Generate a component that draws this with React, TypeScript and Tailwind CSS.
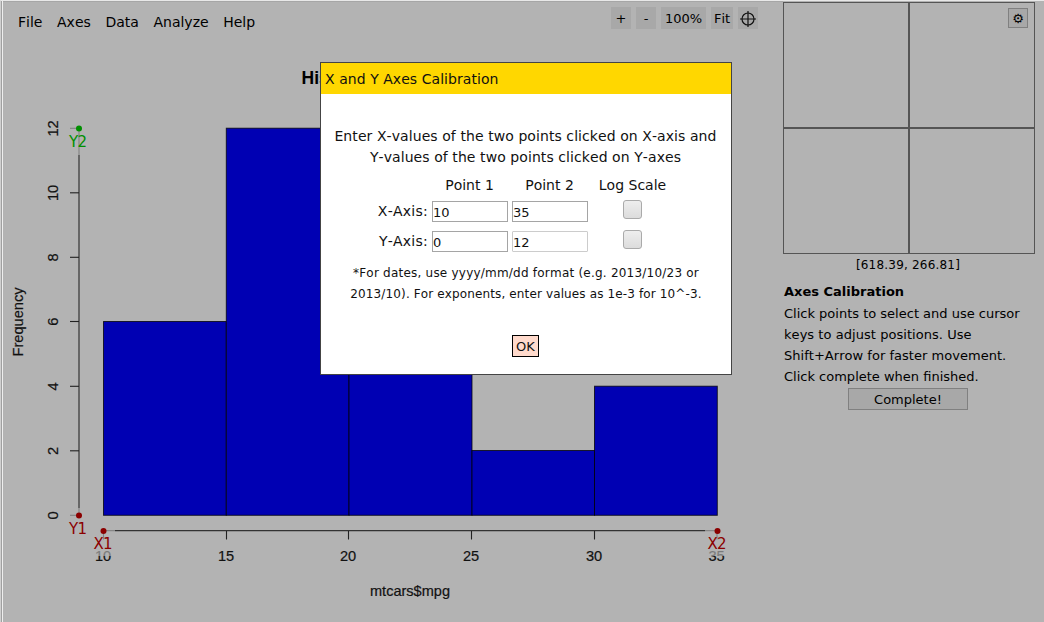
import React from "react";

const bars = [
  { x: 103.5, w: 122.8, y: 321.5 },
  { x: 226.3, w: 122.7, y: 128.2 },
  { x: 349, w: 123, y: 257 },
  { x: 472, w: 122.5, y: 450.5 },
  { x: 594.5, w: 122.8, y: 386.2 },
];

const xTicks = [
  { v: "10", x: 103.5 },
  { v: "15", x: 226.5 },
  { v: "20", x: 348.5 },
  { v: "25", x: 471.5 },
  { v: "30", x: 594.5 },
  { v: "35", x: 717 },
];

const yTicks = [
  { v: "0", y: 515.5 },
  { v: "2", y: 451 },
  { v: "4", y: 386.5 },
  { v: "6", y: 321.7 },
  { v: "8", y: 257.5 },
  { v: "10", y: 193 },
  { v: "12", y: 128.5 },
];

function Histogram() {
  return (
    <svg width="770" height="574" viewBox="0 48 770 574" className="block">
      <g fontFamily="'Liberation Sans', sans-serif" fontSize="14.6" fill="#111" textAnchor="middle">
        <text x="410" y="84" fontSize="17.5" fontWeight="bold" fill="#000">Histogram of mtcars$mpg</text>
        <text x="410" y="596" textLength="80" lengthAdjust="spacingAndGlyphs" stroke="#111" strokeWidth="0.2">mtcars$mpg</text>
        <text transform="translate(23.4 322) rotate(-90)" textLength="69" lengthAdjust="spacingAndGlyphs" stroke="#111" strokeWidth="0.2">Frequency</text>
        {xTicks.map((t) => (
          <text key={t.v} x={t.x - 0.5} y="561" stroke="#111" strokeWidth="0.2">{t.v}</text>
        ))}
        {yTicks.map((t) => (
          <text key={t.v} transform={`translate(58 ${t.y}) rotate(-90)`} stroke="#111" strokeWidth="0.2">{t.v}</text>
        ))}
      </g>
      <g stroke="#000" strokeOpacity="0.75" fill="#0000b3">
        {bars.map((b) => (
          <rect key={b.x} x={b.x} y={b.y} width={b.w} height={515.3 - b.y} />
        ))}
      </g>
      <path d="M103 530.7H717" stroke="#333" strokeWidth="1.2" />
      <g stroke="#222" strokeWidth="1.1">
        {xTicks.map((t) => (
          <path key={t.v} d={`M${t.x} 531V539.5`} />
        ))}
      </g>
      <path d="M79 128V516" stroke="#666" strokeWidth="2" />
      <g stroke="#222" strokeWidth="1.1">
        {yTicks.map((t) => (
          <path key={t.v} d={`M70 ${t.y - 0.2}H79`} />
        ))}
      </g>
      <g fill="#b3b3b3" fillOpacity="0.65">
        <rect x="66" y="116" width="26" height="39" />
        <rect x="66" y="508" width="26" height="35" />
        <rect x="91" y="519" width="24" height="37" />
        <rect x="705" y="519" width="26" height="37" />
      </g>
      <g fontFamily="'DejaVu Sans', sans-serif" fontSize="15" textAnchor="middle" fill="#8b0000">
        <circle cx="79" cy="515.5" r="3" />
        <text x="78" y="534" textLength="18">Y1</text>
        <circle cx="103.5" cy="531" r="3" />
        <text x="103" y="549" textLength="19">X1</text>
        <circle cx="717.5" cy="531" r="3" />
        <text x="717" y="549" textLength="19">X2</text>
        <g fill="#008f00">
          <circle cx="79" cy="128.5" r="3" />
          <text x="78" y="147" textLength="18">Y2</text>
        </g>
      </g>
    </svg>
  );
}

function Menu() {
  return (
    <nav className="flex gap-[14.6px] pt-[11px] text-[14px] leading-[21px]">
      {["File", "Axes", "Data", "Analyze", "Help"].map((m) => (
        <span key={m}>{m}</span>
      ))}
    </nav>
  );
}

function Toolbar() {
  return (
    <div className="flex gap-[5px] pt-[5px] text-[13px] leading-[22px] [&>button]:h-[22px] [&>button]:bg-[#a8a8a8] [&>button]:pt-px">
      <button className="w-5">+</button>
      <button className="w-5">-</button>
      <button className="w-[45px]">100%</button>
      <button className="w-[22px]">Fit</button>
      <button className="flex w-5 items-center justify-center">
        <svg width="18" height="18" viewBox="0 0 18 18" fill="none" stroke="#111" strokeWidth="1.2" className="shrink-0">
          <circle cx="9" cy="9" r="6" />
          <path d="M9 1V17M1 9H17" />
        </svg>
      </button>
    </div>
  );
}

function Sidebar() {
  return (
    <aside className="w-[261px] pt-px text-[13px] leading-[21px]">
      <div className="relative h-[252px] w-[252px] border border-[#555]">
        <svg width="250" height="250" className="block">
          <path d="M125 0V250" stroke="#555" strokeWidth="2" />
          <path d="M0 125H250" stroke="#555" strokeWidth="2" />
        </svg>
        <button className="absolute right-[6px] top-[5px] flex h-5 w-5 items-center justify-center border border-[#808080] bg-[#a8a8a8] text-[13px]">⚙</button>
      </div>
      <div className="w-[250px] text-center text-[12px] leading-[22px] tracking-[0.2px]">[618.39, 266.81]</div>
      <div className="mt-[5px] pl-px">
        <div className="font-bold">Axes Calibration</div>
        <p className="mt-px whitespace-nowrap">
          Click points to select and use cursor
          <br />
          <span className="tracking-[0.05px]">keys to adjust positions. Use</span>
          <br />
          <span className="tracking-[0.03px]">Shift+Arrow for faster movement.</span>
          <br />
          Click complete when finished.
        </p>
        <button className="ml-16 mt-px block h-[22px] w-[120px] border border-[#808080] bg-[#a8a8a8] leading-[21px]">Complete!</button>
      </div>
    </aside>
  );
}

function Field({ value, light }: { value: string; light?: boolean }) {
  return (
    <input
      defaultValue={value}
      className={`h-[21px] w-[76px] border bg-white pt-[2px] text-[13px] outline-none ${light ? "rounded-[1px] border-[#ccc]" : "border-[#a5a5a5]"}`}
    />
  );
}

function Check() {
  return <span className="mb-[3px] ml-[31px] h-[19px] w-[19px] rounded-[3px] border border-[#aaa] bg-linear-to-b from-[#eee] to-[#dcdcdc]" />;
}

function Dialog() {
  return (
    <div className="absolute left-[320px] top-[62px] h-[313px] w-[412px] border border-[#444] bg-white text-[14px] text-[#111]">
      <div className="h-[31px] bg-[#ffd700] pl-1 leading-[32px] tracking-[0.05px]">X and Y Axes Calibration</div>
      <p className="mt-[32px] pr-px text-center leading-[21px] tracking-[0.075px]">
        Enter X-values of the two points clicked on X-axis and
        <br />
        Y-values of the two points clicked on Y-axes
      </p>
      <div className="ml-[53px] mt-[7px] grid grid-cols-[54px_76px_76px_80px] gap-x-1">
        <span />
        <span className="-ml-px text-center leading-[21px]">Point 1</span>
        <span className="-ml-px text-center leading-[21px]">Point 2</span>
        <span className="pl-px text-center leading-[21px]">Log Scale</span>
      </div>
      <div className="ml-[53px] grid grid-cols-[54px_76px_76px_80px] items-center gap-x-1">
        {[
          ["X-Axis:", "10", "35"],
          ["Y-Axis:", "0", "12"],
        ].map(([label, a, b]) => (
          <React.Fragment key={label}>
            <span className="h-[30px] whitespace-nowrap text-right leading-[30px] tracking-[0.25px]">{label}</span>
            <Field value={a} />
            <Field value={b} light={b === "12"} />
            <Check />
          </React.Fragment>
        ))}
      </div>
      <p className="mt-[7px] text-center text-[12px] leading-[21px] tracking-[0.13px]">
        <span className="tracking-[0.22px]">*For dates, use yyyy/mm/dd format (e.g. 2013/10/23 or</span>
        <br />
        2013/10). For exponents, enter values as 1e-3 for 10^-3.
      </p>
      <div className="mt-[30px] flex justify-center">
        <button className="mr-px h-[22px] w-[27px] border border-black bg-[#ffdacc] text-[13px] leading-[21px]">OK</button>
      </div>
    </div>
  );
}

export default function App() {
  return (
    <div className="relative h-[622px] w-[1044px] overflow-hidden bg-[#b3b3b3] font-['DejaVu_Sans',sans-serif] text-black [font-kerning:none]">
      <div className="flex h-full border-l border-t border-l-[#d0d0d0] border-t-[#e8e8e8]">
        <div className="w-[2px] border-l border-r border-l-[#a0a0a0] border-r-[#eee]" />
        <main className="flex w-[780px] flex-col border-t border-[#a6a6a6]">
          <header className="flex h-[46px] justify-between pl-[15px] pr-[25px]">
            <div className="-mt-px">
              <Menu />
            </div>
            <Toolbar />
          </header>
          <div className="-ml-[3px]">
            <Histogram />
          </div>
        </main>
        <Sidebar />
      </div>
      <Dialog />
    </div>
  );
}
